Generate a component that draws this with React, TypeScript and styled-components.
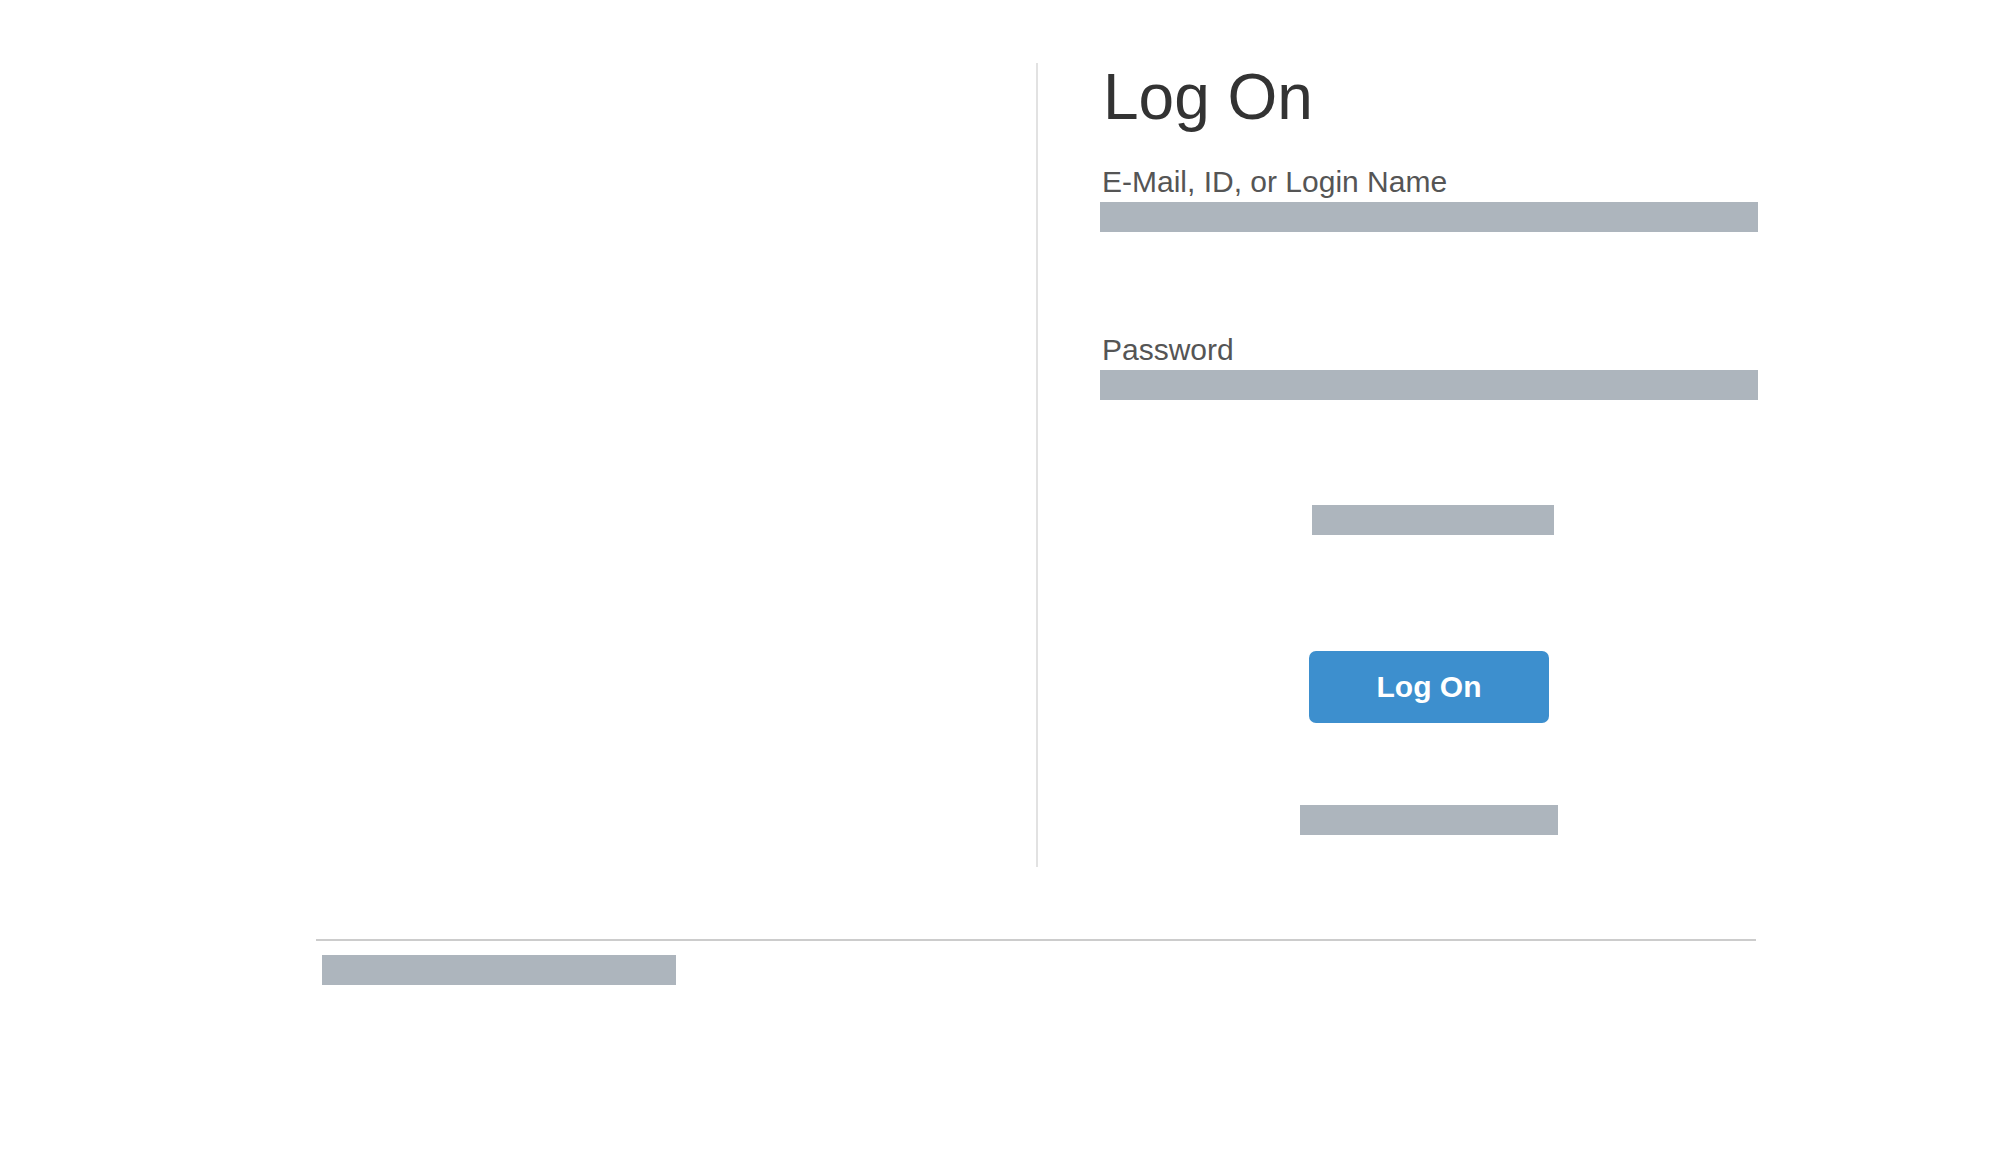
import React from "react";
import styled, { createGlobalStyle } from "styled-components";

const GlobalStyle = createGlobalStyle`
  html, body {
    margin: 0;
    padding: 0;
    background: #ffffff;
    font-family: "Liberation Sans", Arial, Helvetica, sans-serif;
  }
  * { box-sizing: border-box; }
`;

const Page = styled.div`
  width: 1440px;
  margin-left: 316px;
  padding-top: 63px;
`;

const Main = styled.div`
  display: flex;
  align-items: stretch;
`;

const LeftColumn = styled.div`
  flex: 0 0 722px;
  border-right: 2px solid #e2e2e2;
`;

const RightColumn = styled.div`
  flex: 0 0 720px;
  padding-left: 62px;
  padding-bottom: 32px;
  display: flex;
  flex-direction: column;
`;

const Title = styled.h1`
  margin: 0 0 34px 0;
  padding-left: 3px;
  font-size: 64px;
  line-height: 68px;
  font-weight: 400;
  color: #333333;
`;

const Field = styled.div<{ $gap?: number }>`
  display: flex;
  flex-direction: column;
  width: 658px;
  margin-bottom: ${(p) => p.$gap ?? 0}px;
`;

const Label = styled.label`
  font-size: 30px;
  line-height: 34px;
  color: #555555;
  padding-left: 2px;
  margin-bottom: 3px;
`;

const Placeholder = styled.div<{ $w: number; $shift?: number }>`
  width: ${(p) => p.$w}px;
  height: 30px;
  background: #adb5bd;
  margin-left: ${(p) => p.$shift ?? 0}px;
`;

const Centered = styled.div<{ $gap?: number }>`
  width: 658px;
  display: flex;
  justify-content: center;
  margin-bottom: ${(p) => p.$gap ?? 0}px;
`;

const Button = styled.button`
  width: 240px;
  height: 72px;
  border: none;
  border-radius: 7px;
  background: #3d8fce;
  color: #ffffff;
  font-family: "Liberation Sans", Arial, Helvetica, sans-serif;
  font-size: 30px;
  font-weight: 700;
  padding: 0;
  cursor: pointer;
`;

const Rule = styled.hr`
  margin: 72px 0 0 0;
  border: none;
  height: 2px;
  background: #cccccc;
`;

const Footer = styled.div`
  padding: 14px 0 0 6px;
`;

export default function App() {
  return (
    <>
      <GlobalStyle />
      <Page>
        <Main>
          <LeftColumn />
          <RightColumn>
            <Title>Log On</Title>
            <Field $gap={101}>
              <Label>E-Mail, ID, or Login Name</Label>
              <Placeholder $w={658} />
            </Field>
            <Field $gap={105}>
              <Label>Password</Label>
              <Placeholder $w={658} />
            </Field>
            <Centered $gap={116}>
              <Placeholder $w={242} $shift={8} />
            </Centered>
            <Centered $gap={82}>
              <Button type="button">Log On</Button>
            </Centered>
            <Centered>
              <Placeholder $w={258} />
            </Centered>
          </RightColumn>
        </Main>
        <Rule />
        <Footer>
          <Placeholder $w={354} />
        </Footer>
      </Page>
    </>
  );
}
